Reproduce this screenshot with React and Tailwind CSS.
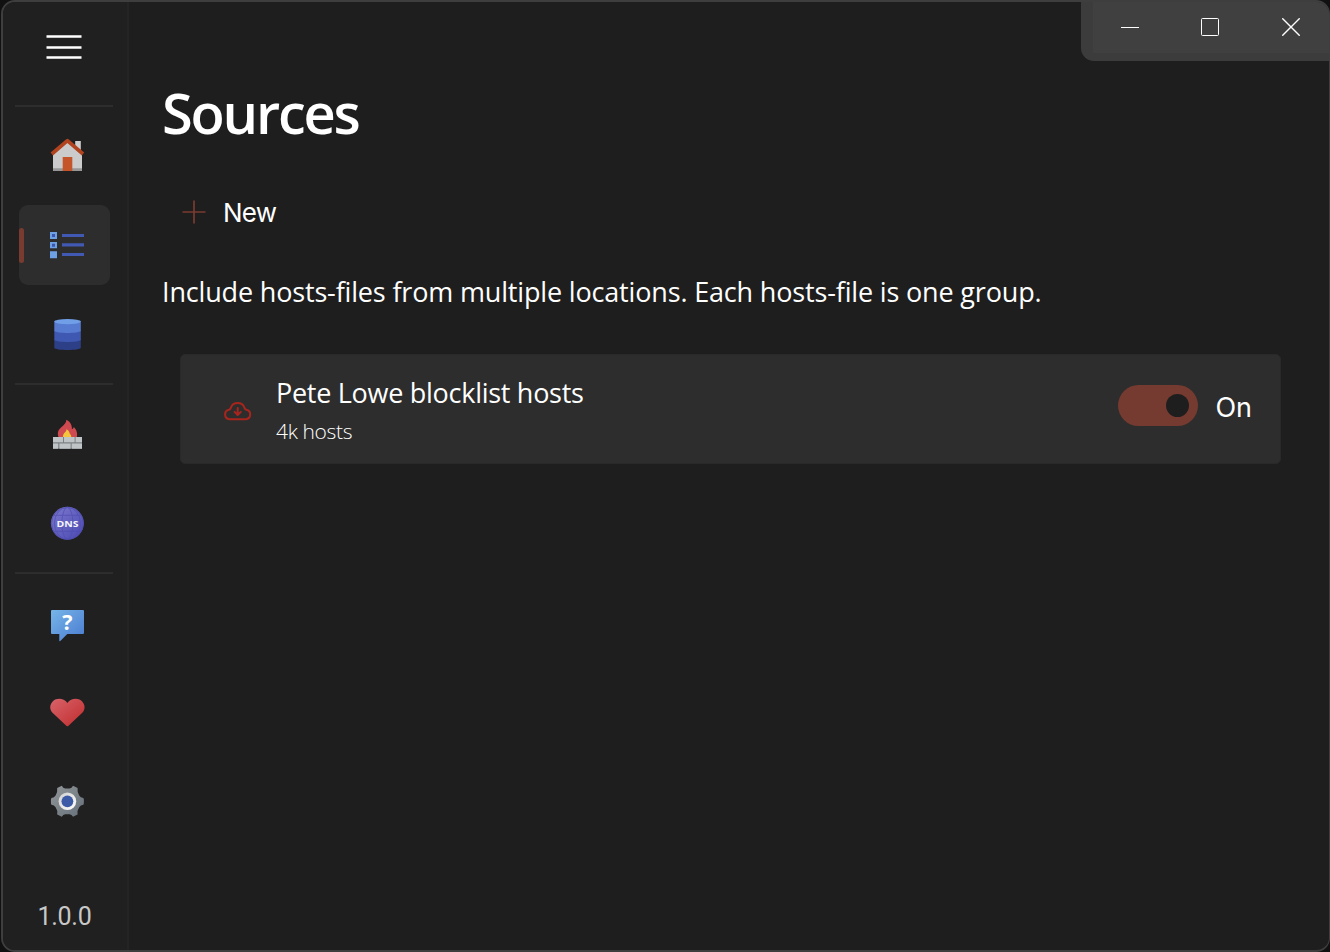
import React from "react";

function HomeIcon() {
  return (
    <svg className="h-9 w-9 overflow-visible" viewBox="0 0 36 36">
      <rect x="26.2" y="3" width="5.6" height="12" fill="#cfcfcf" />
      <path d="M18.4 3.5 33 16.5V32a1 1 0 0 1-1 1H5a1 1 0 0 1-1-1V16.5Z" fill="#cbcbcb" />
      <path d="M4 30.2h29V32a1 1 0 0 1-1 1H5a1 1 0 0 1-1-1Z" fill="#979797" />
      <rect x="13.7" y="19" width="9.6" height="14" fill="#c4542a" />
      <path d="M2.8 16 18.4 2.7 34 16" fill="none" stroke="#b1441f" strokeWidth="3.7" strokeLinejoin="round" />
    </svg>
  );
}

function ListIcon() {
  return (
    <svg className="h-9 w-9" viewBox="0 0 36 36">
      <path d="M1 5h7v7H1zM1 15h7v6.3H1zM1 24.2h7v7H1z" fill="#6ea0e6" />
      <path d="M3 7h3v3H3zM3 16.7h3v3H3z" fill="#3c57b0" />
      <path d="M13 7h22v3H13zM13 16.2h22v3.4H13zM13 26h22v3H13z" fill="#4259b4" />
    </svg>
  );
}

function DatabaseIcon() {
  return (
    <svg className="h-9 w-9" viewBox="0 0 36 36">
      <path d="M5.300 23.500h26.500v8.300c0 3-26.500 3-26.500 0Z" fill="#2d3f87" />
      <path d="M5.300 14.500h26.500v9.600c-3 2.600-23.500 2.600-26.500 0Z" fill="#3f58b2" />
      <path d="M5.300 5.300h26.500v9.800c-3 2.600-23.500 2.600-26.500 0Z" fill="#567bd0" />
      <ellipse cx="18.550" cy="5.600" rx="13.250" ry="2.600" fill="#709fe8" />
    </svg>
  );
}

function FirewallIcon() {
  return (
    <svg className="h-9 w-9" viewBox="0 0 36 36">
      <path
        d="M10 22C8 18 8.600 14.500 12 11.500 15.500 8.500 17.500 6.500 17.300 3.700 20.800 5.300 23.300 8.800 22.900 13.200 24.200 12.800 24.700 11.900 24.700 11.100 27.700 13.800 29 18 27.600 22Z"
        fill="#cf4a50"
      />
      <path d="M14 21.500c-.4-2 .7-4.500 2.400-5.600.8-.6 1-1.500 1-2.600 1.800.9 3 2.600 3.400 4.400 1 .8 1.600 2.200 1.500 3.800Z" fill="#f2c53d" />
      <path d="M4 21h29v11.700H4z" fill="#7c8284" />
      <path d="M4 21h10v5.300H4zM15 21h10.600v5.300H15zM26.600 21H33v5.300h-6.400zM4 27.500h5.200v5.200H4zM10.400 27.500h11.200v5.200H10.400zM22.700 27.500H33v5.200H22.700z" fill="#bfc4c6" />
    </svg>
  );
}

function DnsIcon() {
  return (
    <svg className="h-9 w-9" viewBox="0 0 36 36">
      <defs>
        <linearGradient id="dns" x1="0" y1="0" x2="1" y2="1">
          <stop offset="0" stopColor="#7c7ace" />
          <stop offset="1" stopColor="#4a48b0" />
        </linearGradient>
      </defs>
      <circle cx="18.400" cy="18.300" r="16.500" fill="url(#dns)" />
      <g fill="none" stroke="#4f4db2" strokeWidth="1" opacity="0.700">
        <circle cx="18.400" cy="18.300" r="15.900" />
        <ellipse cx="18.400" cy="18.300" rx="5.500" ry="16" />
        <ellipse cx="18.400" cy="18.300" rx="13" ry="16" />
        <path d="M4.500 10.300h27.800M4.500 26.300h27.800" />
      </g>
      <text x="18.500" y="21.800" textAnchor="middle" fontFamily="Open Sans, sans-serif" fontWeight="700" fontSize="9.500" textLength="22" lengthAdjust="spacingAndGlyphs" fill="#f5f5fb">
        DNS
      </text>
    </svg>
  );
}

function HelpIcon() {
  return (
    <svg className="h-9 w-9 overflow-visible" viewBox="0 0 36 36">
      <defs>
        <linearGradient id="help" x1="0" y1="0" x2="1" y2="1">
          <stop offset="0" stopColor="#76b5e8" />
          <stop offset="1" stopColor="#4a7bd0" />
        </linearGradient>
      </defs>
      <path d="M3 5h31a1 1 0 0 1 1 1v22a1 1 0 0 1-1 1H18.300l-7 7q-1 .8-1-.5V29H3a1 1 0 0 1-1-1V6a1 1 0 0 1 1-1Z" fill="url(#help)" />
      <text x="18.400" y="24.800" textAnchor="middle" fontFamily="Open Sans, sans-serif" fontWeight="700" fontSize="21.500" fill="#fff">
        ?
      </text>
    </svg>
  );
}

function HeartIcon() {
  return (
    <svg className="h-9 w-9 overflow-visible" viewBox="0 0 36 36">
      <defs>
        <linearGradient id="heart" x1="0" y1="0" x2="1" y2="1">
          <stop offset="0" stopColor="#d8636a" />
          <stop offset="1" stopColor="#c02c2c" />
        </linearGradient>
      </defs>
      <path
        d="M18.400 8.900C22 3.600 29.300 3.600 32.700 7 36.400 10.700 36.500 15.500 33.300 18.800L19.200 32Q18.400 32.700 17.600 32L3.500 18.800C.4 15.500.4 10.700 4.100 7 7.500 3.600 14.800 3.600 18.400 8.900Z"
        fill="url(#heart)"
      />
    </svg>
  );
}

function GearIcon() {
  return (
    <svg className="h-9 w-9" viewBox="0 0 36 36">
      <defs>
        <linearGradient id="gear" x1="0" y1="0" x2="1" y2="1">
          <stop offset="0" stopColor="#929698" />
          <stop offset="1" stopColor="#65707a" />
        </linearGradient>
        <linearGradient id="ring" x1="0" y1="0" x2="1" y2="1">
          <stop offset="0" stopColor="#cfcfcf" />
          <stop offset="1" stopColor="#ffffff" />
        </linearGradient>
      </defs>
      <path
        d="M8.200 5 12.800 2.800Q14 5.400 16.200 5.400H20.600Q22.800 5.400 24 2.800L28.600 5Q28 9.500 30.200 12.400 31.500 14.500 34.300 14.900 35 15.200 34.900 18.300 35 21.400 34.300 21.700 31.500 22.100 30.200 24.200 28 27.100 28.600 31.600L24 33.800Q22.800 31.200 20.600 31.200H16.200Q14 31.200 12.800 33.800L8.200 31.600Q8.800 27.100 6.600 24.200 5.300 22.100 2.500 21.700 1.800 21.400 1.900 18.300 1.800 15.200 2.500 14.900 5.300 14.500 6.600 12.400 8.800 9.500 8.200 5Z"
        fill="url(#gear)"
      />
      <circle cx="18.400" cy="18.300" r="8.800" fill="url(#ring)" />
      <circle cx="18.400" cy="18.300" r="5.900" fill="#3c5aa6" />
    </svg>
  );
}

function NavItem({ icon: Icon, active }) {
  return (
    <button
      className={
        active
          ? "flex h-20 w-[91px] items-center rounded-[9px] bg-[#2d2d2d]"
          : "flex h-20 w-[91px] items-center rounded-[9px]"
      }
    >
      <span className={active ? "h-[35px] w-[5px] rounded-full bg-[#793b30]" : "w-[5px]"} />
      <span className="ml-[25px]">
        <Icon />
      </span>
    </button>
  );
}

function Separator() {
  return <div className="mr-px h-0.5 w-[98px] bg-[#2d2d2d]" />;
}

function Sidebar() {
  return (
    <nav className="flex w-[126px] shrink-0 flex-col items-center gap-[9px] border-r-2 border-[#242424] bg-[#202020] pr-px pb-[17px]">
      <button className="mr-px flex h-[94px] w-[98px] flex-col items-center pt-[33px]">
        <svg className="h-6 w-9" viewBox="0 0 36 24">
          <path d="M.5 1.500h35M.5 12.500h35M.5 22.500h35" stroke="#fff" strokeWidth="2.700" />
        </svg>
      </button>
      <Separator />
      <NavItem icon={HomeIcon} />
      <NavItem icon={ListIcon} active />
      <NavItem icon={DatabaseIcon} />
      <Separator />
      <NavItem icon={FirewallIcon} />
      <NavItem icon={DnsIcon} />
      <Separator />
      <NavItem icon={HelpIcon} />
      <NavItem icon={HeartIcon} />
      <NavItem icon={GearIcon} />
      <p className="mt-auto font-['Roboto',sans-serif] text-[25px] leading-8 tracking-[-0.300px] text-[#c8c8c8]">1.0.0</p>
    </nav>
  );
}

function WindowControls() {
  return (
    <div className="flex h-[59px] w-[248px] rounded-bl-[13px] bg-[#3c3c3c] pb-2 pl-3">
      <div className="flex flex-1 bg-[#404040] pl-[28px]">
        <svg className="mt-4 h-[18px] w-[18px]" viewBox="0 0 18 18" shapeRendering="crispEdges">
          <path d="M0 9.500h18" stroke="#fff" />
        </svg>
        <svg className="mt-4 ml-[62px] h-[18px] w-[18px]" viewBox="0 0 18 18">
          <rect x=".5" y=".5" width="17" height="17" rx="1" fill="none" stroke="#fff" />
        </svg>
        <svg className="mt-4 ml-[63px] h-[18px] w-[18px]" viewBox="0 0 18 18">
          <path d="M.3.3 17.700 17.700M17.700.3.3 17.700" stroke="#fff" strokeWidth="1.400" />
        </svg>
      </div>
    </div>
  );
}

function SourceCard() {
  return (
    <div className="mt-[44px] ml-[18px] flex h-[110px] w-[1101px] rounded-[5px] border border-[#292929] bg-[#2d2d2d]">
      <svg className="mt-[45px] ml-[42px] h-[22px] w-[30px]" viewBox="0 0 30 22" fill="none" stroke="#a8251d" strokeWidth="2" strokeLinecap="round" strokeLinejoin="round">
        <path d="M6.500 19.200a4.800 4.800 0 0 1-.5-9.500c1-.1 1.400-.5 1.800-1.800a7.300 7.300 0 0 1 13.700 0c.4 1.300.8 1.700 1.800 1.800a4.800 4.800 0 0 1-.5 9.500Z" />
        <path d="M14.700 8v6.500M11.600 11.900l3.100 3.100 3.100-3.100" />
      </svg>
      <div className="ml-[23px] flex flex-col pt-5">
        <h2 className="text-[27px] leading-9 tracking-[-0.280px]">Pete Lowe blocklist hosts</h2>
        <p className="mt-1 text-[21px] leading-8 font-light tracking-[-0.350px]">4k hosts</p>
      </div>
      <div className="mt-[30px] mr-[28px] ml-auto flex h-[41px] items-center">
        <button className="flex h-[41px] w-20 items-center justify-end rounded-full bg-[#753b30] pr-[9px]">
          <span className="h-[23px] w-[23px] rounded-full bg-[#1e1e1e]" />
        </button>
        <span className="mt-1.5 ml-[17px] font-['Inter',sans-serif] text-[27px]">On</span>
      </div>
    </div>
  );
}

export default function App() {
  return (
    <div className="h-[952px] w-[1330px] bg-[#111111] pl-px font-['Open_Sans',sans-serif] text-white">
      <div className="flex h-full overflow-hidden rounded-[14px] border-2 border-r border-[#3e3e3e] bg-[#1e1e1e]">
        <Sidebar />
        <main className="flex flex-1 flex-col">
          <header className="flex justify-end">
            <WindowControls />
          </header>
          <section className="flex flex-col pl-[33px]">
            <h1 className="mt-[19px] text-[56px] leading-[64px] font-semibold tracking-[-2.200px]">Sources</h1>
            <button className="mt-[48px] ml-[20px] flex h-10 items-center">
              <svg className="h-6 w-6" viewBox="0 0 24 24">
                <path d="M.5 12h23M12 .5v23" stroke="#7a3b30" strokeWidth="1.700" />
              </svg>
              <span className="ml-[17px] font-['Inter',sans-serif] text-[26px] tracking-[-0.800px]">New</span>
            </button>
            <p className="mt-[42px] text-[27px] leading-9 tracking-[-0.165px] whitespace-nowrap">
              Include hosts-files from multiple locations. Each hosts-file is one group.
            </p>
            <SourceCard />
          </section>
        </main>
      </div>
    </div>
  );
}
